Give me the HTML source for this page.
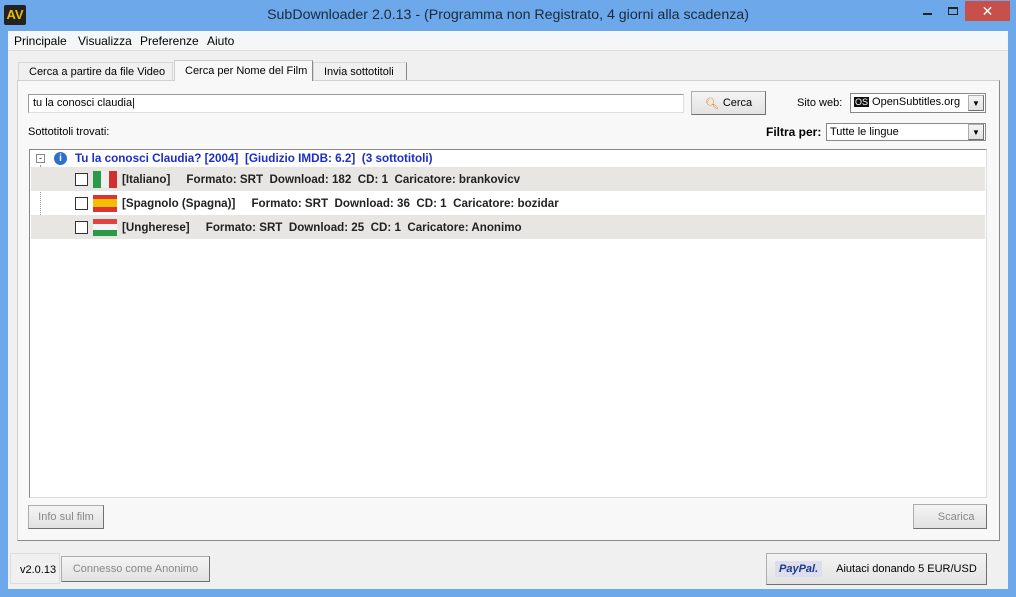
<!DOCTYPE html><html><head><style>
*{margin:0;padding:0;box-sizing:border-box}
body{width:1016px;height:597px;background:#6ca8ea;font-family:"Liberation Sans",sans-serif;font-size:12px;color:#000;position:relative;overflow:hidden}
.a{position:absolute}
.btn{position:absolute;background:linear-gradient(#f4f4f4,#e2e2e2);border:1px solid #adadad;border-right-color:#707070;border-bottom-color:#707070;display:flex;align-items:center;justify-content:center}
.row{position:absolute;left:1px;right:1px;height:24px;display:flex;align-items:center;font-weight:bold;font-size:11.6px;color:#222}
.cb{width:13px;height:13px;border:1px solid #333;background:#fff;margin-left:44px;margin-right:5px}
.fl{width:24px;height:17px;margin-right:5px;display:flex}
</style></head><body>
<div class="a" style="left:4px;top:5px;width:22px;height:20px;background:#222;border-radius:2px;color:#e8c000;font-weight:bold;font-size:13px;text-align:center;line-height:20px">AV</div>
<div class="a" style="left:0;top:7px;width:1016px;text-align:center;font-size:14.2px;color:#1a2a3a">SubDownloader 2.0.13 - (Programma non Registrato, 4 giorni alla scadenza)</div>
<div class="a" style="left:923px;top:13px;width:9px;height:2px;background:#222"></div>
<div class="a" style="left:948px;top:7px;width:10px;height:8px;border:1px solid #222;border-top-width:2px"></div>
<div class="a" style="left:965px;top:1px;width:45px;height:20px;background:#c7504a;color:#fff;text-align:center;font-size:14px;line-height:20px">✕</div>
<div class="a" style="left:8px;top:31px;width:1000px;height:558px;background:#f0f0f0"></div>
<div class="a" style="left:8px;top:31px;width:1000px;height:20px;background:#f5f6f7;border-bottom:1px solid #ddd"></div>
<div class="a" style="left:14px;top:34px">Principale</div>
<div class="a" style="left:78px;top:34px">Visualizza</div>
<div class="a" style="left:140px;top:34px">Preferenze</div>
<div class="a" style="left:207px;top:34px">Aiuto</div>
<div class="a" style="left:18px;top:62px;width:155px;height:19px;background:#f0f0f0;border:1px solid #d8d8d8;border-bottom:none;padding:3px 0 0 10px;font-size:11px">Cerca a partire da file Video</div>
<div class="a" style="left:174px;top:60px;width:139px;height:21px;background:#f8f8f8;border:1px solid #ccc;border-right-color:#888;border-bottom:none;padding:4px 0 0 10px;font-size:11px;z-index:2">Cerca per Nome del Film</div>
<div class="a" style="left:313px;top:62px;width:94px;height:19px;border:1px solid #d8d8d8;border-right-color:#888;border-bottom:none;padding:3px 0 0 10px;font-size:11px">Invia sottotitoli</div>
<div class="a" style="left:17px;top:80px;width:983px;height:461px;background:#f8f8f8;border:1px solid #d0d0d0;border-right-color:#888;border-bottom-color:#888"></div>
<div class="a" style="left:28px;top:94px;width:656px;height:19px;background:#fff;border:1px solid #999;border-bottom-color:#ddd;border-right-color:#ddd;padding:2px 4px;font-size:11px">tu la conosci claudia|</div>
<div class="btn" style="left:691px;top:91px;width:75px;height:24px;font-size:11px"><span style="color:#e07a10;margin-right:4px">🔍︎</span>Cerca</div>
<div class="a" style="left:797px;top:97px;font-size:11px">Sito web:</div>
<div class="a" style="left:850px;top:93px;width:136px;height:20px;background:#fff;border:1px solid #888;font-size:11px;padding:2px 0 0 3px"><span style="background:#111;color:#fff;font-size:9px;padding:0 1px;margin-right:3px">OS</span>OpenSubtitles.org</div>
<div class="btn" style="left:968px;top:95px;width:16px;height:16px;font-size:8px">▼</div>
<div class="a" style="left:28px;top:126px;font-size:11px">Sottotitoli trovati:</div>
<div class="a" style="left:766px;top:125px;font-size:12px;font-weight:bold">Filtra per:</div>
<div class="a" style="left:826px;top:123px;width:160px;height:18px;background:#fff;border:1px solid #888;font-size:11px;padding:2px 0 0 3px">Tutte le lingue</div>
<div class="btn" style="left:968px;top:124px;width:16px;height:16px;font-size:8px">▼</div>
<div class="a" style="left:29px;top:149px;width:958px;height:349px;background:#fff;border:1px solid #888;border-right-color:#ddd;border-bottom-color:#ddd">
<div class="a" style="left:6px;top:4px;width:9px;height:9px;border:1px solid #888;font-size:9px;line-height:6px;text-align:center">-</div>
<div class="a" style="left:24px;top:2px;width:13px;height:13px;border-radius:50%;background:#2d6fcf;color:#fff;font-size:10px;font-weight:bold;text-align:center;line-height:13px">i</div>
<div class="a" style="left:45px;top:2px;font-weight:bold;color:#1b2ec8;font-size:11.7px;white-space:pre">Tu la conosci Claudia? [2004]  [Giudizio IMDB: 6.2]  (3 sottotitoli)</div>
<div class="a" style="left:10px;top:15px;height:62px;border-left:1px dotted #999"></div>
<div class="row" style="top:17px;background:#e8e6e3"><div class="cb"></div><div class="fl"><i style="flex:1;background:#2a9a48"></i><i style="flex:1;background:#eee"></i><i style="flex:1;background:#d23030"></i></div><span style="white-space:pre">[Italiano]     Formato: SRT  Download: 182  CD: 1  Caricatore: brankovicv</span></div>
<div class="row" style="top:41px"><div class="cb"></div><div class="fl" style="flex-direction:column"><i style="flex:1;background:#d33"></i><i style="flex:2;background:#f2c000"></i><i style="flex:1;background:#d33"></i></div><span style="white-space:pre">[Spagnolo (Spagna)]     Formato: SRT  Download: 36  CD: 1  Caricatore: bozidar</span></div>
<div class="row" style="top:65px;background:#e8e6e3"><div class="cb"></div><div class="fl" style="flex-direction:column"><i style="flex:1;background:#d44"></i><i style="flex:1;background:#f4f4f4"></i><i style="flex:1;background:#2a9a48"></i></div><span style="white-space:pre">[Ungherese]     Formato: SRT  Download: 25  CD: 1  Caricatore: Anonimo</span></div>
</div>
<div class="btn" style="left:28px;top:505px;width:76px;height:24px;font-size:11px;color:#888">Info sul film</div>
<div class="btn" style="left:913px;top:504px;width:74px;height:25px;font-size:11px;color:#888">&nbsp;&nbsp;&nbsp;&nbsp;Scarica</div>
<div class="a" style="left:10px;top:553px;width:50px;height:31px;border:1px solid #ddd;font-size:11px;padding:10px 0 0 9px">v2.0.13</div>
<div class="btn" style="left:61px;top:556px;width:149px;height:26px;font-size:11px;color:#888">Connesso come Anonimo</div>
<div class="btn" style="left:766px;top:553px;width:221px;height:32px;font-size:11px;justify-content:flex-start"><span style="background:#dde;color:#1b3a8a;font-weight:bold;font-style:italic;padding:2px 4px;margin:0 14px 0 8px">PayPal.</span>Aiutaci donando 5 EUR/USD</div>
</body></html>
